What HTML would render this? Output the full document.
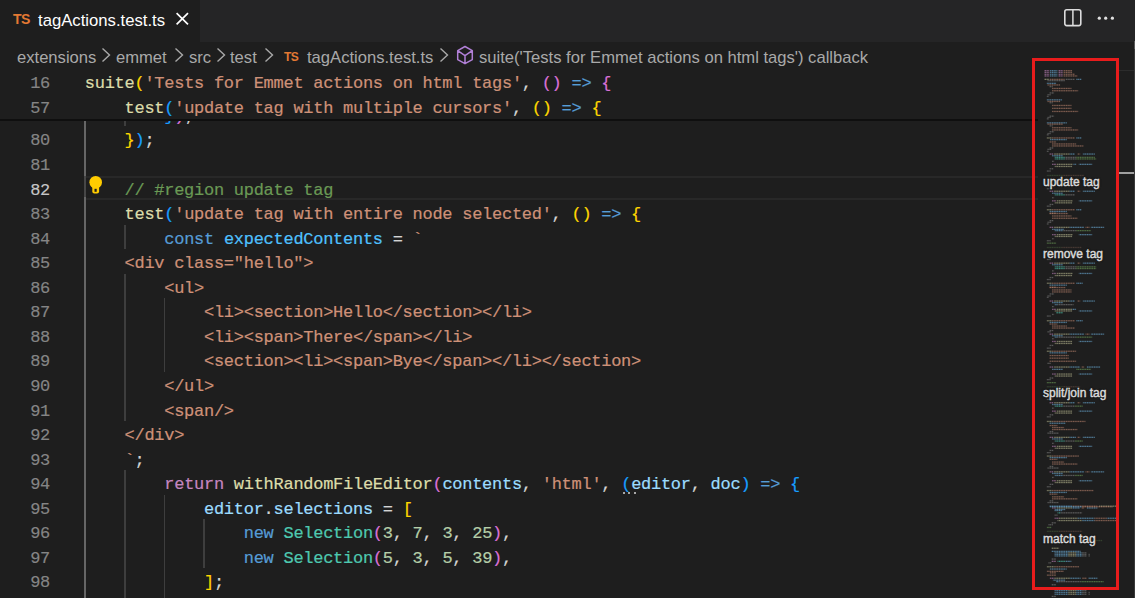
<!DOCTYPE html>
<html><head><meta charset="utf-8">
<style>
html,body{margin:0;padding:0;}
body{width:1135px;height:598px;overflow:hidden;background:#1e1e1e;position:relative;font-family:"Liberation Sans",sans-serif;}
.abs{position:absolute;}
#tabs{position:absolute;left:0;top:0;width:1135px;height:41.5px;background:#252526;}
#tab{position:absolute;left:0;top:0;width:200px;height:41.5px;background:#1e1e1e;}
.tsicon{position:absolute;font-family:"Liberation Sans",sans-serif;font-weight:bold;color:#e37933;white-space:nowrap;}
#title{position:absolute;left:38px;top:9px;font-size:16.7px;line-height:24px;color:#ffffff;white-space:nowrap;}
#bc{position:absolute;left:0;top:41px;width:1135px;height:29px;color:#a9a9a9;font-size:16.6px;white-space:nowrap;}
#bc span.t{position:absolute;top:4.7px;line-height:24px;}
#editor{position:absolute;left:0;top:70px;width:1038px;height:528px;overflow:hidden;}
.ln{position:absolute;left:84.8px;height:24.555px;line-height:24.555px;font-family:"Liberation Mono",monospace;font-size:17px;letter-spacing:-0.27px;white-space:pre;color:#d4d4d4;-webkit-text-stroke-width:0.2px;}
.num{position:absolute;left:0;width:50px;text-align:right;height:24.555px;line-height:24.555px;font-family:"Liberation Mono",monospace;font-size:17px;letter-spacing:-0.27px;color:#858585;-webkit-text-stroke-width:0.15px;}
.num.act{color:#c6c6c6;}
.guide{position:absolute;width:1.6px;background:#3e3e3e;}
.gact{background:#666666;width:2.2px;}
#code .ln,#code .num{margin-top:-67px;}
#code .guide{margin-top:-70px;}
#sticky{position:absolute;left:0;top:0px;width:1038px;height:49.11px;background:#1e1e1e;}
#shadow{position:absolute;left:0;top:49.1px;width:1038px;height:2.2px;background:#0f0f0f;}
#sticky .ln,#sticky .num{margin-top:-67.6px;}
#minimap{position:absolute;left:1038px;top:70px;width:81px;height:528px;overflow:hidden;}
.mmh{position:absolute;left:5px;font-size:12px;line-height:16px;color:#dcdcdc;-webkit-text-stroke:0.4px #dcdcdc;white-space:nowrap;text-shadow:0 0 2px #1e1e1e,0 0 2px #1e1e1e;}
#red{position:absolute;left:1032px;top:58px;width:81px;height:526px;border:3px solid #e81c1c;}
</style></head><body>
<div id="tabs">
  <div id="tab">
    <div class="tsicon" style="left:13px;top:11px;font-size:14px;line-height:16px;letter-spacing:-0.5px;">TS</div>
    <div id="title">tagActions.test.ts</div>
    <svg class="abs" style="left:175px;top:11px" width="15" height="15" viewBox="0 0 15 15"><path d="M1.6 2.2 L13 13.4 M13 2.2 L1.6 13.4" stroke="#ffffff" stroke-width="1.7" fill="none"/></svg>
  </div>
  <svg class="abs" style="left:1063px;top:8px" width="20" height="20" viewBox="0 0 20 20"><rect x="1.8" y="1.8" width="16" height="15.8" rx="2" stroke="#dddddd" stroke-width="1.6" fill="none"/><path d="M9.9 2 V17.6" stroke="#dddddd" stroke-width="1.5"/></svg>
  <svg class="abs" style="left:1094px;top:14px" width="24" height="8" viewBox="0 0 24 8"><circle cx="5.3" cy="4.2" r="1.6" fill="#e0e0e0"/><circle cx="11.7" cy="4.2" r="1.6" fill="#e0e0e0"/><circle cx="18.4" cy="4.2" r="1.6" fill="#e0e0e0"/></svg>
</div>
<div id="bc">
  <span class="t" style="left:17px">extensions</span>
  <span class="t" style="left:116px">emmet</span>
  <span class="t" style="left:189px">src</span>
  <span class="t" style="left:230px">test</span>
  <span class="t" style="left:307px">tagActions.test.ts</span>
  <span class="t" style="left:479px">suite('Tests for Emmet actions on html tags') callback</span>
  <svg class="abs" style="left:100px;top:6px" width="12" height="16" viewBox="0 0 12 16"><path d="M2.5 1.5 L9.5 8 L2.5 14.5" stroke="#a9a9a9" stroke-width="1.4" fill="none"/></svg>
  <svg class="abs" style="left:173px;top:6px" width="12" height="16" viewBox="0 0 12 16"><path d="M2.5 1.5 L9.5 8 L2.5 14.5" stroke="#a9a9a9" stroke-width="1.4" fill="none"/></svg>
  <svg class="abs" style="left:215px;top:6px" width="12" height="16" viewBox="0 0 12 16"><path d="M2.5 1.5 L9.5 8 L2.5 14.5" stroke="#a9a9a9" stroke-width="1.4" fill="none"/></svg>
  <svg class="abs" style="left:263px;top:6px" width="12" height="16" viewBox="0 0 12 16"><path d="M2.5 1.5 L9.5 8 L2.5 14.5" stroke="#a9a9a9" stroke-width="1.4" fill="none"/></svg>
  <svg class="abs" style="left:438px;top:6px" width="12" height="16" viewBox="0 0 12 16"><path d="M2.5 1.5 L9.5 8 L2.5 14.5" stroke="#a9a9a9" stroke-width="1.4" fill="none"/></svg>
  <div class="tsicon" style="left:284px;top:9px;font-size:12px;line-height:14px;letter-spacing:-0.5px;">TS</div>
  <svg class="abs" style="left:455px;top:4px" width="20" height="21" viewBox="0 0 20 21"><path d="M10 1.5 L17.3 5.6 V14.6 L10 18.7 L2.7 14.6 V5.6 Z M2.7 5.6 L10 10.6 L17.3 5.6 M10 10.6 V18.7" stroke="#b180d7" stroke-width="1.5" fill="none" stroke-linejoin="round"/></svg>
</div>
<div id="editor">
  <div id="code">
<div class="abs" style="left:86px;top:105.5px;width:952px;height:20.5px;border-top:2px solid #282828;border-bottom:2px solid #282828;"></div>
<div class="guide gact" style="left:83.80px;top:101.845px;height:515.655px"></div>
<div class="guide" style="left:124.02px;top:101.845px;height:24.555px"></div>
<div class="guide" style="left:124.02px;top:224.620px;height:24.555px"></div>
<div class="guide" style="left:124.02px;top:273.730px;height:147.330px"></div>
<div class="guide" style="left:163.74px;top:298.285px;height:73.665px"></div>
<div class="guide" style="left:124.02px;top:470.170px;height:147.330px"></div>
<div class="guide" style="left:163.74px;top:494.725px;height:122.775px"></div>
<div class="guide" style="left:203.46px;top:519.280px;height:49.110px"></div>
<div class="guide" style="left:83.8px;top:176.3px;height:20.3px;width:2.2px;background:#474747"></div>
<svg class="abs" style="left:88px;top:105px;margin-top:0" width="16" height="20" viewBox="0 0 16 20"><circle cx="7.7" cy="7.2" r="6.3" fill="#ffcc00"/><path d="M4.3 11 H11.1 V16.5 Q11.1 18.6 9 18.6 H6.4 Q4.3 18.6 4.3 16.5 Z" fill="#ffcc00"/><rect x="6.5" y="13.8" width="2.2" height="3" fill="#1e1e1e"/></svg>
<div class="num" style="top:101.845px">79</div>
<div class="num" style="top:126.400px">80</div>
<div class="num" style="top:150.955px">81</div>
<div class="num act" style="top:175.510px">82</div>
<div class="num" style="top:200.065px">83</div>
<div class="num" style="top:224.620px">84</div>
<div class="num" style="top:249.175px">85</div>
<div class="num" style="top:273.730px">86</div>
<div class="num" style="top:298.285px">87</div>
<div class="num" style="top:322.840px">88</div>
<div class="num" style="top:347.395px">89</div>
<div class="num" style="top:371.950px">90</div>
<div class="num" style="top:396.505px">91</div>
<div class="num" style="top:421.060px">92</div>
<div class="num" style="top:445.615px">93</div>
<div class="num" style="top:470.170px">94</div>
<div class="num" style="top:494.725px">95</div>
<div class="num" style="top:519.280px">96</div>
<div class="num" style="top:543.835px">97</div>
<div class="num" style="top:568.390px">98</div>
<div class="ln" style="top:101.845px"><span style="color:#d4d4d4">        </span><span style="color:#179fff">}</span><span style="color:#da70d6">)</span><span style="color:#d4d4d4">;</span></div>
<div class="ln" style="top:126.400px"><span style="color:#d4d4d4">    </span><span style="color:#ffd700">}</span><span style="color:#179fff">)</span><span style="color:#d4d4d4">;</span></div>
<div class="ln" style="top:150.955px"></div>
<div class="ln" style="top:175.510px"><span style="color:#d4d4d4">    </span><span style="color:#6a9955">// #region update tag</span></div>
<div class="ln" style="top:200.065px"><span style="color:#d4d4d4">    </span><span style="color:#dcdcaa">test</span><span style="color:#179fff">(</span><span style="color:#ce9178">&#x27;update tag with entire node selected&#x27;</span><span style="color:#d4d4d4">, </span><span style="color:#ffd700">()</span><span style="color:#d4d4d4"> </span><span style="color:#569cd6">=&gt;</span><span style="color:#d4d4d4"> </span><span style="color:#ffd700">{</span></div>
<div class="ln" style="top:224.620px"><span style="color:#d4d4d4">        </span><span style="color:#569cd6">const</span><span style="color:#d4d4d4"> </span><span style="color:#4fc1ff">expectedContents</span><span style="color:#d4d4d4"> = </span><span style="color:#ce9178">`</span></div>
<div class="ln" style="top:249.175px"><span style="color:#ce9178">    &lt;div class=&quot;hello&quot;&gt;</span></div>
<div class="ln" style="top:273.730px"><span style="color:#ce9178">        &lt;ul&gt;</span></div>
<div class="ln" style="top:298.285px"><span style="color:#ce9178">            &lt;li&gt;&lt;section&gt;Hello&lt;/section&gt;&lt;/li&gt;</span></div>
<div class="ln" style="top:322.840px"><span style="color:#ce9178">            &lt;li&gt;&lt;span&gt;There&lt;/span&gt;&lt;/li&gt;</span></div>
<div class="ln" style="top:347.395px"><span style="color:#ce9178">            &lt;section&gt;&lt;li&gt;&lt;span&gt;Bye&lt;/span&gt;&lt;/li&gt;&lt;/section&gt;</span></div>
<div class="ln" style="top:371.950px"><span style="color:#ce9178">        &lt;/ul&gt;</span></div>
<div class="ln" style="top:396.505px"><span style="color:#ce9178">        &lt;span/&gt;</span></div>
<div class="ln" style="top:421.060px"><span style="color:#ce9178">    &lt;/div&gt;</span></div>
<div class="ln" style="top:445.615px"><span style="color:#ce9178">    `</span><span style="color:#d4d4d4">;</span></div>
<div class="ln" style="top:470.170px"><span style="color:#d4d4d4">        </span><span style="color:#c586c0">return</span><span style="color:#d4d4d4"> </span><span style="color:#dcdcaa">withRandomFileEditor</span><span style="color:#da70d6">(</span><span style="color:#9cdcfe">contents</span><span style="color:#d4d4d4">, </span><span style="color:#ce9178">&#x27;html&#x27;</span><span style="color:#d4d4d4">, </span><span style="color:#179fff">(</span><span style="color:#9cdcfe">editor</span><span style="color:#d4d4d4">, </span><span style="color:#9cdcfe">doc</span><span style="color:#179fff">)</span><span style="color:#d4d4d4"> </span><span style="color:#569cd6">=&gt;</span><span style="color:#d4d4d4"> </span><span style="color:#179fff">{</span></div>
<div class="ln" style="top:494.725px"><span style="color:#d4d4d4">            </span><span style="color:#9cdcfe">editor</span><span style="color:#d4d4d4">.</span><span style="color:#9cdcfe">selections</span><span style="color:#d4d4d4"> = </span><span style="color:#ffd700">[</span></div>
<div class="ln" style="top:519.280px"><span style="color:#d4d4d4">                </span><span style="color:#569cd6">new</span><span style="color:#d4d4d4"> </span><span style="color:#4ec9b0">Selection</span><span style="color:#da70d6">(</span><span style="color:#b5cea8">3</span><span style="color:#d4d4d4">, </span><span style="color:#b5cea8">7</span><span style="color:#d4d4d4">, </span><span style="color:#b5cea8">3</span><span style="color:#d4d4d4">, </span><span style="color:#b5cea8">25</span><span style="color:#da70d6">)</span><span style="color:#d4d4d4">,</span></div>
<div class="ln" style="top:543.835px"><span style="color:#d4d4d4">                </span><span style="color:#569cd6">new</span><span style="color:#d4d4d4"> </span><span style="color:#4ec9b0">Selection</span><span style="color:#da70d6">(</span><span style="color:#b5cea8">5</span><span style="color:#d4d4d4">, </span><span style="color:#b5cea8">3</span><span style="color:#d4d4d4">, </span><span style="color:#b5cea8">5</span><span style="color:#d4d4d4">, </span><span style="color:#b5cea8">39</span><span style="color:#da70d6">)</span><span style="color:#d4d4d4">,</span></div>
<div class="ln" style="top:568.390px"><span style="color:#d4d4d4">            </span><span style="color:#ffd700">]</span><span style="color:#d4d4d4">;</span></div>
  </div>
  <div id="sticky">
<div class="ln" style="top:70.000px"><span style="color:#dcdcaa">suite</span><span style="color:#ffd700">(</span><span style="color:#ce9178">&#x27;Tests for Emmet actions on html tags&#x27;</span><span style="color:#d4d4d4">, </span><span style="color:#da70d6">()</span><span style="color:#d4d4d4"> </span><span style="color:#569cd6">=&gt;</span><span style="color:#d4d4d4"> </span><span style="color:#da70d6">{</span></div>
<div class="num" style="top:70.000px">16</div>
<div class="ln" style="top:94.555px"><span style="color:#d4d4d4">    </span><span style="color:#dcdcaa">test</span><span style="color:#179fff">(</span><span style="color:#ce9178">&#x27;update tag with multiple cursors&#x27;</span><span style="color:#d4d4d4">, </span><span style="color:#ffd700">()</span><span style="color:#d4d4d4"> </span><span style="color:#569cd6">=&gt;</span><span style="color:#d4d4d4"> </span><span style="color:#ffd700">{</span></div>
<div class="num" style="top:94.555px">57</div>
  </div>
  <div id="shadow"></div>
</div>
<div id="minimap"><svg width="81" height="528" style="position:absolute;left:0;top:0"><defs><pattern id="chp" width="1.75" height="4" patternUnits="userSpaceOnUse"><rect x="0" y="0" width="1.25" height="4" fill="#fff"/></pattern><mask id="chm"><rect width="81" height="528" fill="url(#chp)"/></mask></defs><g mask="url(#chm)"><rect x="6.0" y="-0.0" width="5.4" height="1.3" fill="#c586c0" fill-opacity="0.62"/><rect x="12.0" y="-0.0" width="7.4" height="1.3" fill="#6fb3e0" fill-opacity="0.62"/><rect x="20.1" y="-0.0" width="4.7" height="1.3" fill="#c586c0" fill-opacity="0.62"/><rect x="25.4" y="-0.0" width="8.7" height="1.3" fill="#ce9178" fill-opacity="0.56"/><rect x="6.0" y="1.7" width="5.4" height="1.3" fill="#c586c0" fill-opacity="0.62"/><rect x="12.0" y="1.7" width="7.4" height="1.3" fill="#6fb3e0" fill-opacity="0.62"/><rect x="20.1" y="1.7" width="4.7" height="1.3" fill="#c586c0" fill-opacity="0.62"/><rect x="25.4" y="1.7" width="8.7" height="1.3" fill="#ce9178" fill-opacity="0.56"/><rect x="6.0" y="3.6" width="5.4" height="1.3" fill="#c586c0" fill-opacity="0.62"/><rect x="12.0" y="3.6" width="7.4" height="1.3" fill="#6fb3e0" fill-opacity="0.62"/><rect x="20.1" y="3.6" width="4.7" height="1.3" fill="#c586c0" fill-opacity="0.62"/><rect x="25.4" y="3.6" width="11.4" height="1.3" fill="#ce9178" fill-opacity="0.56"/><rect x="6.0" y="5.3" width="5.4" height="1.3" fill="#c586c0" fill-opacity="0.62"/><rect x="12.0" y="5.3" width="7.4" height="1.3" fill="#6fb3e0" fill-opacity="0.62"/><rect x="20.1" y="5.3" width="4.7" height="1.3" fill="#c586c0" fill-opacity="0.62"/><rect x="25.4" y="5.3" width="14.0" height="1.3" fill="#ce9178" fill-opacity="0.56"/><rect x="6.0" y="8.7" width="5.4" height="1.3" fill="#dcdcaa" fill-opacity="0.52"/><rect x="12.0" y="8.7" width="14.7" height="1.3" fill="#ce9178" fill-opacity="0.56"/><rect x="27.4" y="8.7" width="9.4" height="1.3" fill="#bbbbbb" fill-opacity="0.40"/><rect x="38.1" y="8.7" width="5.4" height="1.3" fill="#6fb3e0" fill-opacity="0.62"/><rect x="9.4" y="10.0" width="17.4" height="1.3" fill="#bbbbbb" fill-opacity="0.40"/><rect x="8.7" y="12.7" width="9.4" height="1.3" fill="#6fb3e0" fill-opacity="0.62"/><rect x="9.4" y="14.3" width="12.7" height="1.3" fill="#ce9178" fill-opacity="0.56"/><rect x="11.4" y="16.0" width="3.3" height="1.3" fill="#bbbbbb" fill-opacity="0.40"/><rect x="14.1" y="17.8" width="19.4" height="1.3" fill="#ce9178" fill-opacity="0.56"/><rect x="14.1" y="20.1" width="26.1" height="1.3" fill="#ce9178" fill-opacity="0.56"/><rect x="11.4" y="22.3" width="4.7" height="1.3" fill="#bbbbbb" fill-opacity="0.40"/><rect x="9.4" y="24.1" width="3.3" height="1.3" fill="#bbbbbb" fill-opacity="0.40"/><rect x="8.7" y="25.8" width="2.0" height="1.3" fill="#bbbbbb" fill-opacity="0.40"/><rect x="8.7" y="29.2" width="15.4" height="1.3" fill="#6fb3e0" fill-opacity="0.62"/><rect x="9.4" y="30.8" width="12.7" height="1.3" fill="#ce9178" fill-opacity="0.56"/><rect x="11.4" y="32.1" width="3.3" height="1.3" fill="#bbbbbb" fill-opacity="0.40"/><rect x="14.1" y="34.8" width="19.4" height="1.3" fill="#ce9178" fill-opacity="0.56"/><rect x="14.1" y="37.7" width="19.4" height="1.3" fill="#ce9178" fill-opacity="0.56"/><rect x="14.1" y="40.8" width="26.1" height="1.3" fill="#ce9178" fill-opacity="0.56"/><rect x="11.4" y="45.5" width="4.7" height="1.3" fill="#bbbbbb" fill-opacity="0.40"/><rect x="9.4" y="46.8" width="3.3" height="1.3" fill="#bbbbbb" fill-opacity="0.40"/><rect x="8.7" y="48.2" width="2.0" height="1.3" fill="#bbbbbb" fill-opacity="0.40"/><rect x="8.7" y="52.2" width="20.1" height="1.3" fill="#6fb3e0" fill-opacity="0.62"/><rect x="9.4" y="53.5" width="15.4" height="1.3" fill="#ce9178" fill-opacity="0.56"/><rect x="11.4" y="55.2" width="3.3" height="1.3" fill="#bbbbbb" fill-opacity="0.40"/><rect x="14.1" y="57.1" width="19.4" height="1.3" fill="#ce9178" fill-opacity="0.56"/><rect x="14.1" y="59.3" width="26.1" height="1.3" fill="#ce9178" fill-opacity="0.56"/><rect x="11.4" y="61.1" width="4.7" height="1.3" fill="#bbbbbb" fill-opacity="0.40"/><rect x="9.4" y="62.9" width="3.3" height="1.3" fill="#bbbbbb" fill-opacity="0.40"/><rect x="8.7" y="64.2" width="2.0" height="1.3" fill="#bbbbbb" fill-opacity="0.40"/><rect x="8.7" y="67.3" width="5.4" height="1.3" fill="#dcdcaa" fill-opacity="0.52"/><rect x="14.1" y="67.3" width="22.7" height="1.3" fill="#ce9178" fill-opacity="0.56"/><rect x="38.1" y="67.3" width="5.4" height="1.3" fill="#6fb3e0" fill-opacity="0.62"/><rect x="12.0" y="69.0" width="16.7" height="1.3" fill="#6fb3e0" fill-opacity="0.62"/><rect x="11.4" y="71.3" width="6.7" height="1.3" fill="#ce9178" fill-opacity="0.56"/><rect x="14.1" y="73.3" width="24.1" height="1.3" fill="#ce9178" fill-opacity="0.56"/><rect x="14.1" y="75.3" width="31.4" height="1.3" fill="#ce9178" fill-opacity="0.56"/><rect x="11.4" y="77.3" width="4.0" height="1.3" fill="#bbbbbb" fill-opacity="0.40"/><rect x="9.4" y="78.7" width="4.0" height="1.3" fill="#bbbbbb" fill-opacity="0.40"/><rect x="8.7" y="80.7" width="2.0" height="1.3" fill="#bbbbbb" fill-opacity="0.40"/><rect x="11.4" y="83.4" width="4.0" height="1.3" fill="#c586c0" fill-opacity="0.62"/><rect x="16.1" y="83.4" width="15.4" height="1.3" fill="#dcdcaa" fill-opacity="0.52"/><rect x="31.4" y="83.4" width="5.4" height="1.3" fill="#6fb3e0" fill-opacity="0.62"/><rect x="39.5" y="83.4" width="2.7" height="1.3" fill="#ce9178" fill-opacity="0.56"/><rect x="44.8" y="83.4" width="12.0" height="1.3" fill="#6fb3e0" fill-opacity="0.62"/><rect x="14.1" y="85.1" width="10.7" height="1.3" fill="#6fb3e0" fill-opacity="0.62"/><rect x="16.7" y="86.7" width="10.0" height="1.3" fill="#4ec9b0" fill-opacity="0.66"/><rect x="26.8" y="86.7" width="11.4" height="1.3" fill="#bbbbbb" fill-opacity="0.40"/><rect x="38.1" y="86.7" width="18.7" height="1.3" fill="#6a9955" fill-opacity="0.66"/><rect x="16.7" y="88.3" width="10.0" height="1.3" fill="#4ec9b0" fill-opacity="0.66"/><rect x="26.8" y="88.3" width="11.4" height="1.3" fill="#bbbbbb" fill-opacity="0.40"/><rect x="38.1" y="88.3" width="20.1" height="1.3" fill="#6a9955" fill-opacity="0.66"/><rect x="14.1" y="90.7" width="2.0" height="1.3" fill="#bbbbbb" fill-opacity="0.40"/><rect x="14.1" y="93.7" width="4.0" height="1.3" fill="#c586c0" fill-opacity="0.62"/><rect x="18.7" y="93.7" width="16.1" height="1.3" fill="#dcdcaa" fill-opacity="0.52"/><rect x="35.5" y="93.7" width="2.7" height="1.3" fill="#6fb3e0" fill-opacity="0.62"/><rect x="40.8" y="93.7" width="13.4" height="1.3" fill="#6fb3e0" fill-opacity="0.62"/><rect x="16.7" y="95.8" width="17.4" height="1.3" fill="#dcdcaa" fill-opacity="0.52"/><rect x="11.4" y="98.1" width="4.0" height="1.3" fill="#bbbbbb" fill-opacity="0.40"/><rect x="8.7" y="100.4" width="4.0" height="1.3" fill="#bbbbbb" fill-opacity="0.40"/><rect x="8.7" y="104.8" width="16.1" height="1.3" fill="#6a9955" fill-opacity="0.30"/><rect x="24.8" y="104.8" width="21.4" height="1.3" fill="#ce9178" fill-opacity="0.24"/><rect x="8.7" y="118.1" width="2.7" height="1.3" fill="#bbbbbb" fill-opacity="0.40"/><rect x="11.4" y="120.6" width="4.0" height="1.3" fill="#c586c0" fill-opacity="0.62"/><rect x="16.1" y="120.6" width="15.4" height="1.3" fill="#dcdcaa" fill-opacity="0.52"/><rect x="31.4" y="120.6" width="5.4" height="1.3" fill="#6fb3e0" fill-opacity="0.62"/><rect x="39.5" y="120.6" width="2.7" height="1.3" fill="#ce9178" fill-opacity="0.56"/><rect x="44.8" y="120.6" width="12.0" height="1.3" fill="#6fb3e0" fill-opacity="0.62"/><rect x="14.1" y="122.6" width="10.7" height="1.3" fill="#6fb3e0" fill-opacity="0.62"/><rect x="16.7" y="124.2" width="10.0" height="1.3" fill="#4ec9b0" fill-opacity="0.66"/><rect x="26.8" y="124.2" width="10.0" height="1.3" fill="#bbbbbb" fill-opacity="0.40"/><rect x="14.1" y="127.1" width="2.0" height="1.3" fill="#bbbbbb" fill-opacity="0.40"/><rect x="14.1" y="130.2" width="4.0" height="1.3" fill="#c586c0" fill-opacity="0.62"/><rect x="18.7" y="130.2" width="16.1" height="1.3" fill="#dcdcaa" fill-opacity="0.52"/><rect x="40.8" y="130.2" width="13.4" height="1.3" fill="#6fb3e0" fill-opacity="0.62"/><rect x="16.7" y="132.2" width="17.4" height="1.3" fill="#dcdcaa" fill-opacity="0.52"/><rect x="11.4" y="133.8" width="4.0" height="1.3" fill="#bbbbbb" fill-opacity="0.40"/><rect x="8.7" y="135.5" width="4.0" height="1.3" fill="#bbbbbb" fill-opacity="0.40"/><rect x="8.7" y="139.1" width="5.4" height="1.3" fill="#dcdcaa" fill-opacity="0.52"/><rect x="14.1" y="139.1" width="22.7" height="1.3" fill="#ce9178" fill-opacity="0.56"/><rect x="38.1" y="139.1" width="5.4" height="1.3" fill="#6fb3e0" fill-opacity="0.62"/><rect x="11.4" y="140.9" width="17.4" height="1.3" fill="#6fb3e0" fill-opacity="0.62"/><rect x="11.4" y="142.9" width="18.7" height="1.3" fill="#ce9178" fill-opacity="0.56"/><rect x="11.4" y="142.6" width="6.7" height="1.3" fill="#ce9178" fill-opacity="0.56"/><rect x="14.1" y="145.3" width="19.4" height="1.3" fill="#ce9178" fill-opacity="0.56"/><rect x="14.1" y="147.6" width="25.4" height="1.3" fill="#ce9178" fill-opacity="0.56"/><rect x="11.4" y="150.0" width="4.0" height="1.3" fill="#bbbbbb" fill-opacity="0.40"/><rect x="9.4" y="151.6" width="4.0" height="1.3" fill="#bbbbbb" fill-opacity="0.40"/><rect x="8.7" y="153.3" width="2.0" height="1.3" fill="#bbbbbb" fill-opacity="0.40"/><rect x="11.4" y="156.7" width="4.0" height="1.3" fill="#c586c0" fill-opacity="0.62"/><rect x="16.1" y="156.7" width="15.4" height="1.3" fill="#dcdcaa" fill-opacity="0.52"/><rect x="31.4" y="156.7" width="14.7" height="1.3" fill="#6fb3e0" fill-opacity="0.62"/><rect x="47.5" y="156.7" width="4.0" height="1.3" fill="#ce9178" fill-opacity="0.56"/><rect x="52.8" y="156.7" width="13.4" height="1.3" fill="#6fb3e0" fill-opacity="0.62"/><rect x="14.1" y="158.7" width="12.0" height="1.3" fill="#6fb3e0" fill-opacity="0.62"/><rect x="16.7" y="160.0" width="8.0" height="1.3" fill="#6fb3e0" fill-opacity="0.62"/><rect x="24.8" y="160.0" width="13.4" height="1.3" fill="#bbbbbb" fill-opacity="0.40"/><rect x="38.1" y="160.0" width="14.7" height="1.3" fill="#6a9955" fill-opacity="0.66"/><rect x="14.1" y="164.0" width="4.0" height="1.3" fill="#c586c0" fill-opacity="0.62"/><rect x="18.7" y="164.0" width="16.1" height="1.3" fill="#dcdcaa" fill-opacity="0.52"/><rect x="40.8" y="164.0" width="13.4" height="1.3" fill="#6fb3e0" fill-opacity="0.62"/><rect x="16.7" y="165.8" width="17.4" height="1.3" fill="#dcdcaa" fill-opacity="0.52"/><rect x="14.1" y="168.1" width="2.0" height="1.3" fill="#bbbbbb" fill-opacity="0.40"/><rect x="8.7" y="170.1" width="4.0" height="1.3" fill="#bbbbbb" fill-opacity="0.40"/><rect x="8.7" y="172.5" width="9.4" height="1.3" fill="#6a9955" fill-opacity="0.66"/><rect x="8.7" y="176.8" width="14.7" height="1.3" fill="#6a9955" fill-opacity="0.30"/><rect x="23.4" y="176.8" width="20.1" height="1.3" fill="#ce9178" fill-opacity="0.24"/><rect x="8.7" y="188.8" width="4.0" height="1.3" fill="#bbbbbb" fill-opacity="0.40"/><rect x="11.4" y="192.5" width="4.0" height="1.3" fill="#c586c0" fill-opacity="0.62"/><rect x="16.1" y="192.5" width="15.4" height="1.3" fill="#dcdcaa" fill-opacity="0.52"/><rect x="31.4" y="192.5" width="5.4" height="1.3" fill="#6fb3e0" fill-opacity="0.62"/><rect x="39.5" y="192.5" width="2.7" height="1.3" fill="#ce9178" fill-opacity="0.56"/><rect x="44.8" y="192.5" width="12.0" height="1.3" fill="#6fb3e0" fill-opacity="0.62"/><rect x="14.1" y="194.1" width="10.7" height="1.3" fill="#6fb3e0" fill-opacity="0.62"/><rect x="16.7" y="196.2" width="10.0" height="1.3" fill="#4ec9b0" fill-opacity="0.66"/><rect x="26.8" y="196.2" width="11.4" height="1.3" fill="#bbbbbb" fill-opacity="0.40"/><rect x="38.1" y="196.2" width="20.1" height="1.3" fill="#6a9955" fill-opacity="0.66"/><rect x="16.7" y="197.9" width="10.0" height="1.3" fill="#4ec9b0" fill-opacity="0.66"/><rect x="26.8" y="197.9" width="11.4" height="1.3" fill="#bbbbbb" fill-opacity="0.40"/><rect x="38.1" y="197.9" width="20.1" height="1.3" fill="#6a9955" fill-opacity="0.66"/><rect x="14.1" y="200.2" width="2.0" height="1.3" fill="#bbbbbb" fill-opacity="0.40"/><rect x="14.1" y="202.8" width="4.0" height="1.3" fill="#c586c0" fill-opacity="0.62"/><rect x="18.7" y="202.8" width="16.1" height="1.3" fill="#dcdcaa" fill-opacity="0.52"/><rect x="40.8" y="202.8" width="13.4" height="1.3" fill="#6fb3e0" fill-opacity="0.62"/><rect x="16.7" y="204.9" width="17.4" height="1.3" fill="#dcdcaa" fill-opacity="0.52"/><rect x="11.4" y="206.9" width="4.0" height="1.3" fill="#bbbbbb" fill-opacity="0.40"/><rect x="8.7" y="208.9" width="4.0" height="1.3" fill="#bbbbbb" fill-opacity="0.40"/><rect x="8.7" y="212.6" width="5.4" height="1.3" fill="#dcdcaa" fill-opacity="0.52"/><rect x="14.1" y="212.6" width="22.7" height="1.3" fill="#ce9178" fill-opacity="0.56"/><rect x="38.1" y="212.6" width="6.7" height="1.3" fill="#6fb3e0" fill-opacity="0.62"/><rect x="11.4" y="214.5" width="17.4" height="1.3" fill="#6fb3e0" fill-opacity="0.62"/><rect x="11.4" y="216.9" width="16.1" height="1.3" fill="#ce9178" fill-opacity="0.56"/><rect x="11.4" y="216.6" width="6.7" height="1.3" fill="#ce9178" fill-opacity="0.56"/><rect x="14.1" y="219.3" width="19.4" height="1.3" fill="#ce9178" fill-opacity="0.56"/><rect x="14.1" y="221.3" width="19.4" height="1.3" fill="#ce9178" fill-opacity="0.56"/><rect x="11.4" y="223.3" width="4.7" height="1.3" fill="#bbbbbb" fill-opacity="0.40"/><rect x="9.4" y="225.3" width="3.3" height="1.3" fill="#bbbbbb" fill-opacity="0.40"/><rect x="8.7" y="226.7" width="2.0" height="1.3" fill="#bbbbbb" fill-opacity="0.40"/><rect x="11.4" y="230.4" width="4.0" height="1.3" fill="#c586c0" fill-opacity="0.62"/><rect x="16.1" y="230.4" width="15.4" height="1.3" fill="#dcdcaa" fill-opacity="0.52"/><rect x="31.4" y="230.4" width="5.4" height="1.3" fill="#6fb3e0" fill-opacity="0.62"/><rect x="39.5" y="230.4" width="2.7" height="1.3" fill="#ce9178" fill-opacity="0.56"/><rect x="44.8" y="230.4" width="12.0" height="1.3" fill="#6fb3e0" fill-opacity="0.62"/><rect x="14.1" y="232.0" width="10.7" height="1.3" fill="#6fb3e0" fill-opacity="0.62"/><rect x="16.7" y="234.0" width="2.7" height="1.3" fill="#6fb3e0" fill-opacity="0.62"/><rect x="19.4" y="234.0" width="16.1" height="1.3" fill="#bbbbbb" fill-opacity="0.40"/><rect x="14.1" y="236.0" width="2.0" height="1.3" fill="#bbbbbb" fill-opacity="0.40"/><rect x="14.1" y="238.7" width="4.0" height="1.3" fill="#c586c0" fill-opacity="0.62"/><rect x="18.7" y="238.7" width="15.4" height="1.3" fill="#dcdcaa" fill-opacity="0.52"/><rect x="34.1" y="238.7" width="4.0" height="1.3" fill="#6fb3e0" fill-opacity="0.62"/><rect x="16.7" y="240.3" width="17.4" height="1.3" fill="#dcdcaa" fill-opacity="0.52"/><rect x="40.8" y="240.3" width="13.4" height="1.3" fill="#6fb3e0" fill-opacity="0.62"/><rect x="18.1" y="242.1" width="6.7" height="1.3" fill="#4ec9b0" fill-opacity="0.66"/><rect x="14.1" y="243.8" width="2.0" height="1.3" fill="#bbbbbb" fill-opacity="0.40"/><rect x="8.7" y="245.4" width="4.0" height="1.3" fill="#bbbbbb" fill-opacity="0.40"/><rect x="8.7" y="250.1" width="5.4" height="1.3" fill="#dcdcaa" fill-opacity="0.52"/><rect x="14.1" y="250.1" width="22.7" height="1.3" fill="#ce9178" fill-opacity="0.56"/><rect x="38.1" y="250.1" width="6.7" height="1.3" fill="#6fb3e0" fill-opacity="0.62"/><rect x="11.4" y="251.8" width="17.4" height="1.3" fill="#6fb3e0" fill-opacity="0.62"/><rect x="11.4" y="253.4" width="8.0" height="1.3" fill="#ce9178" fill-opacity="0.56"/><rect x="14.1" y="255.4" width="14.7" height="1.3" fill="#ce9178" fill-opacity="0.56"/><rect x="14.1" y="257.4" width="22.7" height="1.3" fill="#ce9178" fill-opacity="0.56"/><rect x="11.4" y="259.9" width="4.0" height="1.3" fill="#bbbbbb" fill-opacity="0.40"/><rect x="9.4" y="261.2" width="3.3" height="1.3" fill="#bbbbbb" fill-opacity="0.40"/><rect x="11.4" y="263.5" width="4.0" height="1.3" fill="#c586c0" fill-opacity="0.62"/><rect x="16.1" y="263.5" width="15.4" height="1.3" fill="#dcdcaa" fill-opacity="0.52"/><rect x="31.4" y="263.5" width="14.7" height="1.3" fill="#6fb3e0" fill-opacity="0.62"/><rect x="47.5" y="263.5" width="4.0" height="1.3" fill="#ce9178" fill-opacity="0.56"/><rect x="52.8" y="263.5" width="13.4" height="1.3" fill="#6fb3e0" fill-opacity="0.62"/><rect x="14.1" y="265.1" width="10.7" height="1.3" fill="#6fb3e0" fill-opacity="0.62"/><rect x="16.7" y="266.5" width="2.7" height="1.3" fill="#6fb3e0" fill-opacity="0.62"/><rect x="19.4" y="266.5" width="18.7" height="1.3" fill="#bbbbbb" fill-opacity="0.40"/><rect x="38.1" y="266.5" width="16.1" height="1.3" fill="#6a9955" fill-opacity="0.66"/><rect x="14.1" y="268.1" width="2.0" height="1.3" fill="#bbbbbb" fill-opacity="0.40"/><rect x="14.1" y="270.8" width="4.0" height="1.3" fill="#c586c0" fill-opacity="0.62"/><rect x="18.7" y="270.8" width="15.4" height="1.3" fill="#dcdcaa" fill-opacity="0.52"/><rect x="40.8" y="270.8" width="13.4" height="1.3" fill="#6fb3e0" fill-opacity="0.62"/><rect x="16.7" y="272.8" width="17.4" height="1.3" fill="#dcdcaa" fill-opacity="0.52"/><rect x="11.4" y="274.8" width="4.0" height="1.3" fill="#bbbbbb" fill-opacity="0.40"/><rect x="8.7" y="277.5" width="4.0" height="1.3" fill="#bbbbbb" fill-opacity="0.40"/><rect x="8.7" y="280.6" width="5.4" height="1.3" fill="#dcdcaa" fill-opacity="0.52"/><rect x="14.1" y="280.6" width="24.1" height="1.3" fill="#ce9178" fill-opacity="0.56"/><rect x="11.4" y="282.2" width="17.4" height="1.3" fill="#6fb3e0" fill-opacity="0.62"/><rect x="11.4" y="284.9" width="19.4" height="1.3" fill="#ce9178" fill-opacity="0.56"/><rect x="11.4" y="287.5" width="19.4" height="1.3" fill="#ce9178" fill-opacity="0.56"/><rect x="11.4" y="290.6" width="26.8" height="1.3" fill="#ce9178" fill-opacity="0.56"/><rect x="9.4" y="292.7" width="3.3" height="1.3" fill="#bbbbbb" fill-opacity="0.40"/><rect x="11.4" y="296.4" width="4.0" height="1.3" fill="#c586c0" fill-opacity="0.62"/><rect x="16.1" y="296.4" width="15.4" height="1.3" fill="#dcdcaa" fill-opacity="0.52"/><rect x="31.4" y="296.4" width="10.7" height="1.3" fill="#6fb3e0" fill-opacity="0.62"/><rect x="43.5" y="296.4" width="2.7" height="1.3" fill="#ce9178" fill-opacity="0.56"/><rect x="48.8" y="296.4" width="13.4" height="1.3" fill="#6fb3e0" fill-opacity="0.62"/><rect x="14.1" y="298.7" width="10.7" height="1.3" fill="#6fb3e0" fill-opacity="0.62"/><rect x="38.1" y="298.7" width="14.7" height="1.3" fill="#6a9955" fill-opacity="0.66"/><rect x="14.1" y="303.4" width="4.0" height="1.3" fill="#c586c0" fill-opacity="0.62"/><rect x="18.7" y="303.4" width="15.4" height="1.3" fill="#dcdcaa" fill-opacity="0.52"/><rect x="40.8" y="303.4" width="13.4" height="1.3" fill="#6fb3e0" fill-opacity="0.62"/><rect x="16.7" y="305.4" width="17.4" height="1.3" fill="#dcdcaa" fill-opacity="0.52"/><rect x="11.4" y="307.4" width="4.0" height="1.3" fill="#bbbbbb" fill-opacity="0.40"/><rect x="8.7" y="309.0" width="4.0" height="1.3" fill="#bbbbbb" fill-opacity="0.40"/><rect x="8.7" y="312.0" width="9.4" height="1.3" fill="#6a9955" fill-opacity="0.66"/><rect x="8.7" y="316.1" width="16.1" height="1.3" fill="#6a9955" fill-opacity="0.30"/><rect x="24.8" y="316.1" width="17.4" height="1.3" fill="#ce9178" fill-opacity="0.24"/><rect x="8.7" y="328.8" width="4.0" height="1.3" fill="#bbbbbb" fill-opacity="0.40"/><rect x="11.4" y="332.1" width="4.0" height="1.3" fill="#c586c0" fill-opacity="0.62"/><rect x="16.1" y="332.1" width="15.4" height="1.3" fill="#dcdcaa" fill-opacity="0.52"/><rect x="31.4" y="332.1" width="5.4" height="1.3" fill="#6fb3e0" fill-opacity="0.62"/><rect x="39.5" y="332.1" width="2.7" height="1.3" fill="#ce9178" fill-opacity="0.56"/><rect x="44.8" y="332.1" width="12.0" height="1.3" fill="#6fb3e0" fill-opacity="0.62"/><rect x="14.1" y="333.9" width="10.7" height="1.3" fill="#6fb3e0" fill-opacity="0.62"/><rect x="16.7" y="335.5" width="8.0" height="1.3" fill="#4ec9b0" fill-opacity="0.66"/><rect x="24.8" y="335.5" width="12.0" height="1.3" fill="#bbbbbb" fill-opacity="0.40"/><rect x="36.8" y="335.5" width="8.0" height="1.3" fill="#6a9955" fill-opacity="0.66"/><rect x="14.1" y="337.5" width="2.0" height="1.3" fill="#bbbbbb" fill-opacity="0.40"/><rect x="14.1" y="340.5" width="4.0" height="1.3" fill="#c586c0" fill-opacity="0.62"/><rect x="18.7" y="340.5" width="15.4" height="1.3" fill="#dcdcaa" fill-opacity="0.52"/><rect x="40.8" y="340.5" width="13.4" height="1.3" fill="#6fb3e0" fill-opacity="0.62"/><rect x="16.7" y="342.4" width="17.4" height="1.3" fill="#dcdcaa" fill-opacity="0.52"/><rect x="11.4" y="344.2" width="4.0" height="1.3" fill="#bbbbbb" fill-opacity="0.40"/><rect x="8.7" y="346.2" width="4.0" height="1.3" fill="#bbbbbb" fill-opacity="0.40"/><rect x="8.7" y="350.8" width="5.4" height="1.3" fill="#dcdcaa" fill-opacity="0.52"/><rect x="14.1" y="350.8" width="33.4" height="1.3" fill="#ce9178" fill-opacity="0.56"/><rect x="11.4" y="352.6" width="16.1" height="1.3" fill="#6fb3e0" fill-opacity="0.62"/><rect x="11.4" y="354.9" width="8.0" height="1.3" fill="#ce9178" fill-opacity="0.56"/><rect x="14.1" y="356.9" width="12.0" height="1.3" fill="#ce9178" fill-opacity="0.56"/><rect x="14.1" y="358.9" width="25.4" height="1.3" fill="#ce9178" fill-opacity="0.56"/><rect x="11.4" y="360.9" width="4.0" height="1.3" fill="#bbbbbb" fill-opacity="0.40"/><rect x="9.4" y="362.5" width="11.4" height="1.3" fill="#bbbbbb" fill-opacity="0.40"/><rect x="11.4" y="366.7" width="4.0" height="1.3" fill="#c586c0" fill-opacity="0.62"/><rect x="16.1" y="366.7" width="15.4" height="1.3" fill="#dcdcaa" fill-opacity="0.52"/><rect x="31.4" y="366.7" width="6.7" height="1.3" fill="#6fb3e0" fill-opacity="0.62"/><rect x="39.5" y="366.7" width="2.7" height="1.3" fill="#ce9178" fill-opacity="0.56"/><rect x="44.8" y="366.7" width="12.0" height="1.3" fill="#6fb3e0" fill-opacity="0.62"/><rect x="14.1" y="368.3" width="10.7" height="1.3" fill="#6fb3e0" fill-opacity="0.62"/><rect x="16.7" y="370.4" width="10.0" height="1.3" fill="#4ec9b0" fill-opacity="0.66"/><rect x="26.8" y="370.4" width="10.0" height="1.3" fill="#bbbbbb" fill-opacity="0.40"/><rect x="36.8" y="370.4" width="8.0" height="1.3" fill="#6a9955" fill-opacity="0.66"/><rect x="14.1" y="372.7" width="2.0" height="1.3" fill="#bbbbbb" fill-opacity="0.40"/><rect x="14.1" y="375.7" width="4.0" height="1.3" fill="#c586c0" fill-opacity="0.62"/><rect x="18.7" y="375.7" width="15.4" height="1.3" fill="#dcdcaa" fill-opacity="0.52"/><rect x="40.8" y="375.7" width="13.4" height="1.3" fill="#6fb3e0" fill-opacity="0.62"/><rect x="16.7" y="377.6" width="17.4" height="1.3" fill="#dcdcaa" fill-opacity="0.52"/><rect x="11.4" y="379.8" width="4.0" height="1.3" fill="#bbbbbb" fill-opacity="0.40"/><rect x="8.7" y="382.0" width="4.0" height="1.3" fill="#bbbbbb" fill-opacity="0.40"/><rect x="8.7" y="385.4" width="5.4" height="1.3" fill="#dcdcaa" fill-opacity="0.52"/><rect x="14.1" y="385.4" width="26.8" height="1.3" fill="#ce9178" fill-opacity="0.56"/><rect x="11.4" y="387.0" width="17.4" height="1.3" fill="#6fb3e0" fill-opacity="0.62"/><rect x="11.4" y="388.7" width="8.0" height="1.3" fill="#ce9178" fill-opacity="0.56"/><rect x="14.1" y="391.4" width="12.0" height="1.3" fill="#ce9178" fill-opacity="0.56"/><rect x="14.1" y="393.4" width="25.4" height="1.3" fill="#ce9178" fill-opacity="0.56"/><rect x="11.4" y="395.8" width="4.0" height="1.3" fill="#bbbbbb" fill-opacity="0.40"/><rect x="9.4" y="397.4" width="11.4" height="1.3" fill="#bbbbbb" fill-opacity="0.40"/><rect x="11.4" y="401.2" width="4.0" height="1.3" fill="#c586c0" fill-opacity="0.62"/><rect x="16.1" y="401.2" width="15.4" height="1.3" fill="#dcdcaa" fill-opacity="0.52"/><rect x="31.4" y="401.2" width="14.7" height="1.3" fill="#6fb3e0" fill-opacity="0.62"/><rect x="47.5" y="401.2" width="4.0" height="1.3" fill="#ce9178" fill-opacity="0.56"/><rect x="52.8" y="401.2" width="13.4" height="1.3" fill="#6fb3e0" fill-opacity="0.62"/><rect x="14.1" y="402.8" width="10.7" height="1.3" fill="#6fb3e0" fill-opacity="0.62"/><rect x="16.7" y="404.8" width="8.0" height="1.3" fill="#6fb3e0" fill-opacity="0.62"/><rect x="24.8" y="404.8" width="12.0" height="1.3" fill="#bbbbbb" fill-opacity="0.40"/><rect x="36.8" y="404.8" width="8.0" height="1.3" fill="#6a9955" fill-opacity="0.66"/><rect x="14.1" y="406.8" width="2.0" height="1.3" fill="#bbbbbb" fill-opacity="0.40"/><rect x="14.1" y="410.1" width="4.0" height="1.3" fill="#c586c0" fill-opacity="0.62"/><rect x="18.7" y="410.1" width="15.4" height="1.3" fill="#dcdcaa" fill-opacity="0.52"/><rect x="40.8" y="410.1" width="13.4" height="1.3" fill="#6fb3e0" fill-opacity="0.62"/><rect x="16.7" y="411.9" width="17.4" height="1.3" fill="#dcdcaa" fill-opacity="0.52"/><rect x="11.4" y="413.7" width="4.0" height="1.3" fill="#bbbbbb" fill-opacity="0.40"/><rect x="8.7" y="416.1" width="4.0" height="1.3" fill="#bbbbbb" fill-opacity="0.40"/><rect x="8.7" y="419.9" width="5.4" height="1.3" fill="#dcdcaa" fill-opacity="0.52"/><rect x="14.1" y="419.9" width="41.5" height="1.3" fill="#ce9178" fill-opacity="0.56"/><rect x="11.4" y="421.8" width="17.4" height="1.3" fill="#6fb3e0" fill-opacity="0.62"/><rect x="11.4" y="423.5" width="8.0" height="1.3" fill="#ce9178" fill-opacity="0.56"/><rect x="14.1" y="426.2" width="12.0" height="1.3" fill="#ce9178" fill-opacity="0.56"/><rect x="14.1" y="428.2" width="25.4" height="1.3" fill="#ce9178" fill-opacity="0.56"/><rect x="11.4" y="430.2" width="4.0" height="1.3" fill="#bbbbbb" fill-opacity="0.40"/><rect x="9.4" y="431.9" width="11.4" height="1.3" fill="#bbbbbb" fill-opacity="0.40"/><rect x="11.4" y="435.5" width="22.7" height="1.3" fill="#6fb3e0" fill-opacity="0.62"/><rect x="34.1" y="435.5" width="25.4" height="1.3" fill="#ce9178" fill-opacity="0.56"/><rect x="60.9" y="435.5" width="17.1" height="1.3" fill="#dcdcaa" fill-opacity="0.52"/><rect x="14.1" y="437.3" width="4.0" height="1.3" fill="#c586c0" fill-opacity="0.62"/><rect x="18.7" y="437.3" width="15.4" height="1.3" fill="#dcdcaa" fill-opacity="0.52"/><rect x="34.1" y="437.3" width="8.0" height="1.3" fill="#6fb3e0" fill-opacity="0.62"/><rect x="43.5" y="437.3" width="2.7" height="1.3" fill="#ce9178" fill-opacity="0.56"/><rect x="48.8" y="437.3" width="10.7" height="1.3" fill="#6fb3e0" fill-opacity="0.62"/><rect x="16.7" y="438.9" width="10.7" height="1.3" fill="#6fb3e0" fill-opacity="0.62"/><rect x="11.8" y="436.1" width="32.3" height="1.3" fill="#6fb3e0" fill-opacity="0.62"/><rect x="44.2" y="436.1" width="30.8" height="1.3" fill="#ce9178" fill-opacity="0.56"/><rect x="16.5" y="439.9" width="7.7" height="1.3" fill="#6fb3e0" fill-opacity="0.62"/><rect x="19.5" y="442.2" width="3.1" height="1.3" fill="#4ec9b0" fill-opacity="0.66"/><rect x="22.6" y="442.2" width="21.5" height="1.3" fill="#bbbbbb" fill-opacity="0.40"/><rect x="16.5" y="444.5" width="3.1" height="1.3" fill="#bbbbbb" fill-opacity="0.40"/><rect x="16.5" y="447.6" width="4.6" height="1.3" fill="#c586c0" fill-opacity="0.62"/><rect x="21.1" y="447.6" width="18.5" height="1.3" fill="#dcdcaa" fill-opacity="0.52"/><rect x="39.5" y="447.6" width="16.9" height="1.3" fill="#6fb3e0" fill-opacity="0.62"/><rect x="56.5" y="447.6" width="12.3" height="1.3" fill="#ce9178" fill-opacity="0.56"/><rect x="68.8" y="447.6" width="9.2" height="1.3" fill="#6fb3e0" fill-opacity="0.62"/><rect x="19.5" y="449.9" width="24.6" height="1.3" fill="#dcdcaa" fill-opacity="0.52"/><rect x="44.2" y="449.9" width="12.3" height="1.3" fill="#6fb3e0" fill-opacity="0.62"/><rect x="56.5" y="449.9" width="21.5" height="1.3" fill="#ce9178" fill-opacity="0.56"/><rect x="13.4" y="452.2" width="4.6" height="1.3" fill="#bbbbbb" fill-opacity="0.40"/><rect x="10.3" y="454.1" width="4.6" height="1.3" fill="#bbbbbb" fill-opacity="0.40"/><rect x="8.8" y="456.8" width="4.6" height="1.3" fill="#6a9955" fill-opacity="0.66"/><rect x="8.8" y="460.7" width="12.3" height="1.3" fill="#6a9955" fill-opacity="0.30"/><rect x="21.1" y="460.7" width="23.1" height="1.3" fill="#ce9178" fill-opacity="0.24"/><rect x="56.5" y="469.9" width="7.7" height="1.3" fill="#6a9955" fill-opacity="0.30"/><rect x="13.4" y="472.2" width="10.8" height="1.3" fill="#bbbbbb" fill-opacity="0.40"/><rect x="13.4" y="477.6" width="7.7" height="1.3" fill="#dcdcaa" fill-opacity="0.52"/><rect x="13.4" y="480.7" width="29.2" height="1.3" fill="#6fb3e0" fill-opacity="0.62"/><rect x="16.5" y="482.2" width="13.8" height="1.3" fill="#6fb3e0" fill-opacity="0.62"/><rect x="30.3" y="482.2" width="7.7" height="1.3" fill="#dcdcaa" fill-opacity="0.52"/><rect x="38.0" y="482.2" width="6.2" height="1.3" fill="#6fb3e0" fill-opacity="0.62"/><rect x="44.2" y="482.2" width="4.6" height="1.3" fill="#bbbbbb" fill-opacity="0.40"/><rect x="16.5" y="483.8" width="13.8" height="1.3" fill="#6fb3e0" fill-opacity="0.62"/><rect x="30.3" y="483.8" width="7.7" height="1.3" fill="#dcdcaa" fill-opacity="0.52"/><rect x="38.0" y="483.8" width="6.2" height="1.3" fill="#6fb3e0" fill-opacity="0.62"/><rect x="44.2" y="483.8" width="4.6" height="1.3" fill="#bbbbbb" fill-opacity="0.40"/><rect x="50.3" y="483.8" width="1.5" height="1.3" fill="#bbbbbb" fill-opacity="0.40"/><rect x="16.5" y="485.3" width="13.8" height="1.3" fill="#6fb3e0" fill-opacity="0.62"/><rect x="30.3" y="485.3" width="7.7" height="1.3" fill="#dcdcaa" fill-opacity="0.52"/><rect x="38.0" y="485.3" width="6.2" height="1.3" fill="#6fb3e0" fill-opacity="0.62"/><rect x="44.2" y="485.3" width="4.6" height="1.3" fill="#bbbbbb" fill-opacity="0.40"/><rect x="50.3" y="485.3" width="1.5" height="1.3" fill="#bbbbbb" fill-opacity="0.40"/><rect x="13.4" y="488.4" width="4.6" height="1.3" fill="#bbbbbb" fill-opacity="0.40"/><rect x="13.4" y="490.7" width="4.6" height="1.3" fill="#c586c0" fill-opacity="0.62"/><rect x="19.5" y="490.7" width="7.7" height="1.3" fill="#4ec9b0" fill-opacity="0.66"/><rect x="27.2" y="490.7" width="6.2" height="1.3" fill="#6fb3e0" fill-opacity="0.62"/><rect x="10.3" y="492.2" width="3.1" height="1.3" fill="#bbbbbb" fill-opacity="0.40"/><rect x="8.8" y="496.1" width="7.7" height="1.3" fill="#dcdcaa" fill-opacity="0.52"/><rect x="16.5" y="496.1" width="24.6" height="1.3" fill="#ce9178" fill-opacity="0.56"/><rect x="11.8" y="498.4" width="16.9" height="1.3" fill="#6fb3e0" fill-opacity="0.62"/><rect x="8.8" y="500.7" width="16.9" height="1.3" fill="#ce9178" fill-opacity="0.56"/><rect x="11.8" y="502.2" width="6.2" height="1.3" fill="#ce9178" fill-opacity="0.56"/><rect x="8.8" y="504.5" width="9.2" height="1.3" fill="#ce9178" fill-opacity="0.56"/><rect x="11.8" y="507.6" width="4.6" height="1.3" fill="#c586c0" fill-opacity="0.62"/><rect x="16.5" y="507.6" width="15.4" height="1.3" fill="#dcdcaa" fill-opacity="0.52"/><rect x="31.8" y="507.6" width="10.8" height="1.3" fill="#6fb3e0" fill-opacity="0.62"/><rect x="44.2" y="507.6" width="4.6" height="1.3" fill="#ce9178" fill-opacity="0.56"/><rect x="50.3" y="507.6" width="9.2" height="1.3" fill="#6fb3e0" fill-opacity="0.62"/><rect x="14.9" y="509.5" width="12.3" height="1.3" fill="#6fb3e0" fill-opacity="0.62"/><rect x="18.0" y="511.0" width="3.1" height="1.3" fill="#6fb3e0" fill-opacity="0.62"/><rect x="21.1" y="511.0" width="21.5" height="1.3" fill="#bbbbbb" fill-opacity="0.40"/><rect x="42.6" y="511.0" width="23.1" height="1.3" fill="#6a9955" fill-opacity="0.66"/><rect x="13.4" y="514.1" width="4.6" height="1.3" fill="#bbbbbb" fill-opacity="0.40"/><rect x="16.5" y="519.9" width="13.8" height="1.3" fill="#6fb3e0" fill-opacity="0.62"/><rect x="30.3" y="519.9" width="7.7" height="1.3" fill="#dcdcaa" fill-opacity="0.52"/><rect x="38.0" y="519.9" width="6.2" height="1.3" fill="#6fb3e0" fill-opacity="0.62"/><rect x="44.2" y="519.9" width="4.6" height="1.3" fill="#bbbbbb" fill-opacity="0.40"/><rect x="16.5" y="521.8" width="13.8" height="1.3" fill="#6fb3e0" fill-opacity="0.62"/><rect x="30.3" y="521.8" width="7.7" height="1.3" fill="#dcdcaa" fill-opacity="0.52"/><rect x="38.0" y="521.8" width="6.2" height="1.3" fill="#6fb3e0" fill-opacity="0.62"/><rect x="44.2" y="521.8" width="4.6" height="1.3" fill="#bbbbbb" fill-opacity="0.40"/><rect x="50.3" y="521.8" width="1.5" height="1.3" fill="#bbbbbb" fill-opacity="0.40"/><rect x="16.5" y="523.6" width="13.8" height="1.3" fill="#6fb3e0" fill-opacity="0.62"/><rect x="30.3" y="523.6" width="7.7" height="1.3" fill="#dcdcaa" fill-opacity="0.52"/><rect x="38.0" y="523.6" width="6.2" height="1.3" fill="#6fb3e0" fill-opacity="0.62"/><rect x="44.2" y="523.6" width="4.6" height="1.3" fill="#bbbbbb" fill-opacity="0.40"/><rect x="50.3" y="523.6" width="1.5" height="1.3" fill="#bbbbbb" fill-opacity="0.40"/><rect x="13.4" y="525.8" width="4.6" height="1.3" fill="#bbbbbb" fill-opacity="0.40"/></g></svg><div class="mmh" style="top:103.60px">update tag</div><div class="mmh" style="top:175.50px">remove tag</div><div class="mmh" style="top:314.70px">split/join tag</div><div class="mmh" style="top:460.50px">match tag</div></div>
<div class="abs" style="left:1119px;top:171.8px;width:14.5px;height:2.2px;background:#a0a0a0"></div>
<div class="abs" style="left:1133.5px;top:41px;width:1.5px;height:557px;background:#3a3a3a"></div>
<div class="abs" style="left:1133.5px;top:41px;width:1.5px;height:8px;background:#5a5a5a"></div>
<div class="abs" style="left:1119px;top:70px;width:14.5px;height:1px;background:#2c2c2c"></div>
<div class="abs" style="left:622.8px;top:492px;width:2px;height:2px;background:#a8a8a8"></div>
<div class="abs" style="left:628.3px;top:492px;width:2px;height:2px;background:#a8a8a8"></div>
<div class="abs" style="left:633.8px;top:492px;width:2px;height:2px;background:#a8a8a8"></div>
<div id="red"></div>
</body></html>
